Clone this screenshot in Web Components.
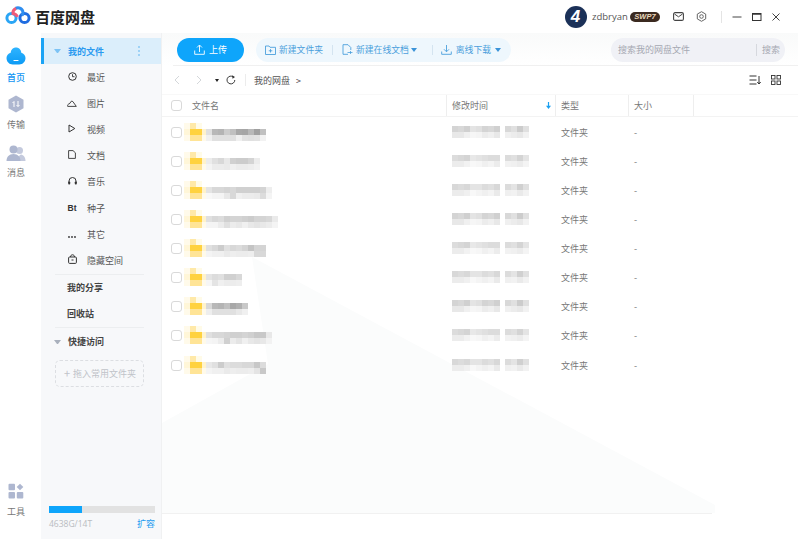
<!DOCTYPE html>
<html lang="zh-CN"><head><meta charset="utf-8"><title>百度网盘</title>
<style>
html,body{margin:0;padding:0;height:539px;overflow:hidden;background:#fff;font-family:"Noto Sans CJK SC","Noto Sans",sans-serif;font-size:9px;color:#555}
</style></head><body>
<bd-app></bd-app>
<script>
const FONT='"Noto Sans CJK SC","Noto Sans",sans-serif';
function def(name,css,html,init){
  customElements.define(name,class extends HTMLElement{
    constructor(){super();const s=this.attachShadow({mode:'open'});s.innerHTML='<style>'+css+'</style>'+(typeof html==='function'?html(this):html);}
    connectedCallback(){if(init&&!this._i){this._i=1;init(this)}}
  });
}
const ic=(w,h,body,extra='')=>`<svg width="${w}" height="${h}" viewBox="0 0 ${w} ${h}" fill="none" ${extra}>${body}</svg>`;

/* pixelated blocks that stand in for the censored names */
def('bd-mosaic',`:host{display:inline-grid;grid-auto-rows:6px;grid-auto-flow:row}
 .r{display:flex}.r i{display:block;width:6px;height:6px;flex:none}`,'',el=>{
  const rows=(el.getAttribute('cells')||'').split(';');
  el.shadowRoot.innerHTML+=rows.map(r=>'<div class="r">'+r.trim().split(/\s+/).map(t=>{
    const c=t==='--'?'transparent':t.length===2?'#'+t+t+t:'#'+t;
    return `<i style="background:${c}"></i>`}).join('')+'</div>').join('');
});

def('bd-titlebar',`:host{display:flex;align-items:center;background:#fff;color:#555;font-family:${FONT}}
 .logo{margin-left:5px;display:block}
 .name{margin-left:2px;font-size:15px;font-weight:700;color:#222;line-height:20px}
 .r{margin-left:auto;display:flex;align-items:center;height:33px}
 .av{width:22px;height:22px;border-radius:50%;background:#1b3158;color:#fff;font:italic 700 17px/22px "Liberation Sans",sans-serif;text-align:center;box-sizing:border-box;padding-right:1px}
 .u{margin-left:5px;font:9.5px "Open Sans",sans-serif;color:#555;width:36px;white-space:nowrap}
 .b{margin-left:2px;width:30px;height:10px;border-radius:5px;background:#3b2a20;color:#ead9bd;font:italic 700 7.5px/10px "Liberation Sans",sans-serif;text-align:center}
 .sep{width:1px;height:12px;background:#e4e4e4;margin:0 10px 0 14px}
 svg{display:block}`,
 `${ic(28,23,`<circle cx="6.500" cy="13" r="4.600" stroke="#2aa5f5" stroke-width="3"/><circle cx="19.500" cy="13" r="4.600" stroke="#1f6ce0" stroke-width="3"/><path d="M10.500 3.400A5 5 0 0 1 18 7.500c0 1.200-.5 2.300-1.200 3.100" stroke="#2f8ef0" stroke-width="3"/><path d="M11 3.300A5 5 0 0 0 8 8.600c2 .3 3.500 1.400 4.500 3.300" stroke="#ef5a78" stroke-width="3"/>`,'class="logo"')}
 <span class="name">百度网盘</span>
 <div class="r">
  <div class="av">4</div><span class="u">zdbryan</span><span class="b">SWP7</span>
  <span style="margin-left:13px">${ic(11,9,`<rect x=".6" y=".6" width="9.800" height="7.800" rx="1.500" stroke="#444" stroke-width="1.100"/><path d="M1.500 2l4 2.800L9.500 2" stroke="#444" stroke-width="1"/>`)}</span>
  <span style="margin-left:12px">${ic(11,11,`<path d="M5.500.7l4.200 2.400v4.800L5.500 10.300 1.300 7.900V3.100z" stroke="#666" stroke-width="1"/><circle cx="5.500" cy="5.500" r="1.800" stroke="#666"/>`)}</span>
  <span class="sep"></span>
  ${ic(10,10,`<path d="M.5 5h9" stroke="#444" stroke-width="1"/>`)}
  <span style="margin-left:10px">${ic(10,10,`<rect x=".5" y="1.500" width="8.500" height="7" stroke="#333"/><path d="M.5 2h8.500" stroke="#333" stroke-width="1.500"/>`)}</span>
  <span style="margin-left:9px;margin-right:17px">${ic(10,10,`<path d="M1.500 1.500l7 7M8.500 1.500l-7 7" stroke="#444" stroke-width="1"/>`)}</span>
 </div>`);

def('bd-rail-item',`:host{display:flex;flex-direction:column;align-items:center;width:32px;height:47.500px;font-size:9px;color:#777;font-family:${FONT}}
 :host([active]){color:#1296f3;font-weight:500}
 .i{height:20px;display:flex;align-items:center;justify-content:center}
 .l{margin-top:4px;line-height:12px}`,
 `<div class="i"><slot name="icon"></slot></div><div class="l"><slot></slot></div>`);

def('bd-rail',`:host{display:flex;flex-direction:column;background:#fff;padding-top:14.500px;padding-bottom:21px;box-sizing:border-box}
 .sp{flex:1}
 .last{height:auto}`,
 `<bd-rail-item active><span slot="icon">${ic(20,18,`<defs><linearGradient id="c" x1="0" y1="0" x2="0" y2="1"><stop offset="0" stop-color="#2fb4ff"/><stop offset="1" stop-color="#0c9bf5"/></linearGradient></defs><path d="M10 .5c3 0 5 2.200 5.300 5.200C17.800 6.400 19.500 8.300 19.500 11c0 3.600-2.700 6.500-6.300 6.500H6.800C3.200 17.500.5 14.600.5 11c0-2.700 1.700-4.600 4.200-5.300C5 2.700 7 .5 10 .5z" fill="url(#c)"/><path d="M8 13.500h4" stroke="#fff" stroke-width="1.200" stroke-linecap="round"/>`)}</span>首页</bd-rail-item>
 <bd-rail-item><span slot="icon">${ic(18,18,`<path d="M9 .5l7.500 4.200v8.600L9 17.500 1.500 13.300V4.700z" fill="#aeb7d0"/><path d="M7 12V6.500M5.500 8L7 6.500M11 6v5.500M9.500 10l1.500 1.500 1.500-1.500" stroke="#fff" stroke-width="1"/>`)}</span>传输</bd-rail-item>
 <bd-rail-item><span slot="icon" style="display:block;margin-top:3px">${ic(20,16,`<circle cx="13.500" cy="5.500" r="3.500" fill="#c4cadd"/><path d="M12 16c0-3 1-6 3-6.500 2.500.3 4.500 3 4.500 6.500z" fill="#c4cadd"/><circle cx="7.500" cy="4.500" r="4" fill="#aeb7d0"/><path d="M.5 16c0-4 2.500-7 7-7s7 3 7 7z" fill="#aeb7d0"/>`)}</span>消息</bd-rail-item>
 <div class="sp"></div>
 <bd-rail-item class="last"><span slot="icon">${ic(16,16,`<rect x=".5" y=".8" width="6.500" height="6.500" rx="1" fill="#aeb7d0"/><path d="M12 .7l3.300 3.300-3.300 3.300-3.300-3.300z" fill="#aeb7d0"/><rect x=".5" y="9" width="6.500" height="6.500" rx="1" fill="#aeb7d0"/><rect x="8.800" y="9" width="6.500" height="6.500" rx="1" fill="#aeb7d0"/>`)}</span>工具</bd-rail-item>`);

def('bd-side-item',`:host{display:flex;align-items:center;height:26.200px;padding-left:24px;color:#555;font-size:9px;font-family:${FONT}}
 .i{width:14px;display:flex;justify-content:center;margin-right:8px;flex:none}`,
 `<div class="i"><slot name="icon"></slot></div><slot></slot>`);

def('bd-side-head',`:host{display:flex;align-items:center;height:26px;padding-left:13px;font-weight:700;font-size:9px;color:#444;font-family:${FONT};box-sizing:border-box}
 :host([active]){background:#dbeefb;color:#2a9af0;border-left:3px solid #1aa3f5;padding-left:10px}
 :host([plain]){padding-left:26px}
 .t{width:7px;height:0;border-left:3.500px solid transparent;border-right:3.500px solid transparent;border-top:4px solid #a9b0bd;box-sizing:border-box;margin-right:7px}
 :host([active]) .t{border-top-color:#7cc3f5}
 :host([plain]) .t{display:none}
 .m{margin-left:auto;margin-right:21px;width:2px;display:flex;flex-direction:column;gap:2px}
 .m i{width:2px;height:2px;background:#8ac8f5;border-radius:1px}
 :host(:not([active])) .m{display:none}`,
 `<span class="t"></span><slot></slot><span class="m"><i></i><i></i><i></i></span>`);

def('bd-sidebar',`:host{display:flex;flex-direction:column;background:#f7f8fa;border-right:1px solid #f0f1f2;padding-top:5px;box-sizing:border-box;font-family:${FONT}}
 .hr{height:1px;background:#eceef0;margin:0 17px 0 14px}
 .drag{margin:4px 17px 0 14px;height:27px;border:1px dashed #dcdee2;border-radius:5px;box-sizing:border-box;display:flex;align-items:center;padding-left:8px;color:#c0c3c9;font-size:9px}
 .drag b{font-weight:400;margin-right:3px;font-size:11px;line-height:10px}
 .st{margin-top:auto;padding:0 6px 9px 8px}
 .bar{height:7px;background:#e2e2e2}
 .bar i{display:block;height:7px;width:33px;background:#0ea5fb}
 .f{display:flex;justify-content:space-between;margin-top:5px;line-height:12px;font-size:9px;color:#b9bcc1}
 .f b{font-weight:400;color:#1c9bf0}
 .f span{font-family:"Open Sans",sans-serif;font-size:8.500px}`,
 `<bd-side-head active>我的文件</bd-side-head>
 <bd-side-item><span slot="icon">${ic(9,9,`<circle cx="4.500" cy="4.500" r="3.800" stroke="#333"/><path d="M4.500 2.200v2.500h2" stroke="#333" stroke-width=".9"/>`)}</span>最近</bd-side-item>
 <bd-side-item><span slot="icon">${ic(10,7,`<path d="M.7 6.400c-.4-1.500.4-2.400 1.500-2.400L4.600 1l1.300.6L9.300 6.400z" stroke="#333" stroke-width=".9"/>`)}</span>图片</bd-side-item>
 <bd-side-item><span slot="icon">${ic(8,9,`<path d="M1 1l5.800 3.500L1 8z" stroke="#333" stroke-width="1" stroke-linejoin="round"/>`)}</span>视频</bd-side-item>
 <bd-side-item><span slot="icon">${ic(8,9,`<path d="M.6.600H5L7.400 2.800v5.600H.6z" stroke="#333" stroke-width=".9"/>`)}</span>文档</bd-side-item>
 <bd-side-item><span slot="icon">${ic(9,8,`<path d="M1 6V4a3.500 3.500 0 0 1 7 0v2" stroke="#333"/><rect x=".2" y="4.500" width="2" height="3" rx=".8" fill="#333"/><rect x="6.800" y="4.500" width="2" height="3" rx=".8" fill="#333"/>`)}</span>音乐</bd-side-item>
 <bd-side-item><span slot="icon" style="font:700 8.500px 'Liberation Sans',sans-serif;color:#333;line-height:10px">Bt</span>种子</bd-side-item>
 <bd-side-item><span slot="icon">${ic(8,2,`<circle cx="1" cy="1" r=".9" fill="#333"/><circle cx="4" cy="1" r=".9" fill="#333"/><circle cx="7" cy="1" r=".9" fill="#333"/>`)}</span>其它</bd-side-item>
 <bd-side-item><span slot="icon">${ic(9,10,`<rect x=".6" y="3" width="7.800" height="6.400" rx="1" stroke="#333"/><path d="M2.500 3c0-3 4-3 4 0" stroke="#333"/><path d="M3.500 6h2" stroke="#333"/>`)}</span>隐藏空间</bd-side-item>
 <div class="hr"></div>
 <bd-side-head plain>我的分享</bd-side-head>
 <bd-side-head plain>回收站</bd-side-head>
 <div class="hr"></div>
 <bd-side-head style="height:28px">快捷访问</bd-side-head>
 <div class="drag"><b>+</b>拖入常用文件夹</div>
 <div class="st"><div class="bar"><i></i></div><div class="f"><span>4638G/14T</span><b>扩容</b></div></div>`);

def('bd-toolbar',`:host{display:flex;align-items:center;height:33px;box-sizing:border-box;padding:0 13px 0 15px;background:linear-gradient(#f9fafa,#fff);position:relative;font-family:${FONT}}
 :host::after{content:"";position:absolute;left:11px;right:0;bottom:0;height:1px;background:#f0f0f0}
 .up{width:67px;height:24px;border-radius:12px;background:#0ea5fb;color:#fff;display:flex;align-items:center;justify-content:center;gap:4px;font-size:9px}
 .pill{margin-left:12px;width:255px;height:24px;border-radius:12px;background:#eef7fd;display:flex;align-items:center;padding-left:9px;box-sizing:border-box;color:#4b9fdc;font-size:8.800px;white-space:nowrap}
 .s{width:1px;height:10px;background:#d4e4f0;flex:none}
 .tri{width:0;height:0;border-left:3px solid transparent;border-right:3px solid transparent;border-top:4px solid #3b93d8;flex:none;margin-left:2px}
 .search{margin-left:auto;width:174px;height:24px;border-radius:12px;background:#f0f1f6;display:flex;align-items:center;padding:0 5px 0 7px;box-sizing:border-box;color:#a5a8b2;font-size:9px}
 .search i{margin-left:auto;width:1px;height:12px;background:#d6d8de;margin-right:5px}
 svg{display:block;flex:none}`,
 `<div class="up">${ic(11,11,`<path d="M5.500 8V1.200M3 3.500l2.500-2.500L8 3.500M.7 6.500v3.800h9.600V6.500" stroke="#fff" stroke-width=".9"/>`)}上传</div>
 <div class="pill">
  ${ic(11,10,`<path d="M.5 1h3.500l1 1.300h5.500v7.200H.5z" stroke="#4b9fdc" stroke-width=".9"/><path d="M3.800 5.800h3.500M5.500 4.100v3.400" stroke="#4b9fdc" stroke-width=".9"/>`)}
  <span style="margin-left:3px">新建文件夹</span><span class="s" style="margin-left:9px"></span>
  ${ic(11,11,`<path d="M6 10.300H1V.7h5l2.800 2.800V6" stroke="#4b9fdc" stroke-width=".9"/><path d="M5.500 8.500h5M8.500 7v3" stroke="#4b9fdc" stroke-width=".8"/>`,'style="margin-left:9px"')}
  <span style="margin-left:3px">新建在线文档</span><span class="tri"></span><span class="s" style="margin-left:15px"></span>
  ${ic(11,11,`<path d="M5.500 1v6.500M3 5.300l2.500 2.500L8 5.300M.7 7.500v2.800h9.600V7.500" stroke="#4b9fdc" stroke-width=".9"/>`,'style="margin-left:8px"')}
  <span style="margin-left:4px">离线下载</span><span class="tri" style="margin-left:4px"></span>
 </div>
 <div class="search"><span>搜索我的网盘文件</span><i></i><span>搜索</span></div>`);

def('bd-nav',`:host{display:flex;align-items:center;height:29px;box-sizing:border-box;border-bottom:1px solid #f8f8f8;padding-right:17px;color:#555;font-size:9px;font-family:${FONT}}
 svg{display:block;flex:none}
 .tr{width:0;height:0;border-left:2.500px solid transparent;border-right:2.500px solid transparent;border-top:3.500px solid #222;margin-left:13px}
 .s{width:1px;height:12px;background:#ececec;margin-left:9px}
 .rt{margin-left:auto;display:flex;gap:10px;align-items:center}`,
 `<span style="margin-left:12px">${ic(6,10,`<path d="M5 1L1 5l4 4" stroke="#cfd2d6" stroke-width=".9"/>`)}</span>
 <span style="margin-left:16px">${ic(6,10,`<path d="M1 1l4 4-4 4" stroke="#cfd2d6" stroke-width=".9"/>`)}</span>
 <span class="tr"></span>
 <span style="margin-left:7px">${ic(10,10,`<path d="M8.800 5A3.900 3.900 0 1 1 7.400 2" stroke="#333" stroke-width=".95"/><path d="M6 .2L9 2 6.600 3.800z" fill="#333"/>`)}</span>
 <span class="s"></span><span style="margin-left:8px">我的网盘</span><span style="margin-left:6px;font-size:9px;color:#444">&gt;</span>
 <div class="rt">${ic(12,10,`<path d="M.5 1h7M.5 5h7M.5 9h7M10 1v8M8.300 7L10 9l1.700-2" stroke="#333" stroke-width="1"/>`)}${ic(10,10,`<rect x=".5" y=".5" width="3.500" height="3.500" stroke="#333" stroke-width=".9"/><rect x="6" y=".5" width="3.500" height="3.500" stroke="#333" stroke-width=".9"/><rect x=".5" y="6" width="3.500" height="3.500" stroke="#333" stroke-width=".9"/><rect x="6" y="6" width="3.500" height="3.500" stroke="#333" stroke-width=".9"/>`)}</div>`);

const COLS='284px 109px 73px 65px 1fr';
def('bd-check',`:host{display:block;width:11px;height:11px;box-sizing:border-box;border:1px solid #d9d9d9;border-radius:3px;background:#fff;flex:none}`,'');

def('bd-thead',`:host{display:grid;grid-template-columns:${COLS};height:22px;box-sizing:border-box;border-bottom:1px solid #f3f3f3;color:#777;font-size:9px;font-family:${FONT}}
 .c{display:flex;align-items:center;border-left:1px solid #eee;padding-left:5px;position:relative}
 .c.first{border:0;padding-left:9px}
 .c.first span{margin-left:10px}
 .c svg{margin-left:auto;margin-right:4px}`,
 `<div class="c first"><bd-check></bd-check><span>文件名</span></div>
 <div class="c"><span>修改时间</span>${ic(5,7,`<path d="M2.500 0v5" stroke="#1a9ff0" stroke-width="1.200"/><path d="M0 3.800h5L2.500 7z" fill="#1a9ff0"/>`)}</div>
 <div class="c"><span>类型</span></div><div class="c"><span>大小</span></div><div class="c"></div>`);

const FOLDER='fffaea ffe9a8 fffbe8 --;fff6d8 ffd23f ffd23f fff3cc;fffaea ffe496 ffe496 fffaea';
def('bd-row',`:host{display:grid;grid-template-columns:${COLS};height:29.125px;color:#777;font-size:9px;font-family:${FONT}}
 .c{display:flex;align-items:center;padding-left:6px;min-width:0}
 .t{padding-top:1px}
 .n{padding-left:9px}
 bd-check{margin-right:2px;margin-top:1px}
 .nm{margin-top:6px;margin-left:-2px;position:relative}
 .dt{display:flex;gap:5px}`,
 el=>{
  const [nt,nb]=el.getAttribute('name').split('|'), [d1,d2]=el.getAttribute('date').split('|');
  const [a,b]=d1.split('/'),[c,e]=d2.split('/');
  return `<div class="c n"><bd-check></bd-check><bd-mosaic cells="${FOLDER}"></bd-mosaic><bd-mosaic class="nm" cells="${nt};${nb}"></bd-mosaic></div>
  <div class="c"><div class="dt"><bd-mosaic cells="${a};${c}"></bd-mosaic><bd-mosaic cells="${b};${e}"></bd-mosaic></div></div>
  <div class="c t"><span>文件夹</span></div><div class="c t"><span>-</span></div><div class="c"></div>`;
 });

const D=['d4 d8 d0 e4 e0 d4 d8 d0/d8 e0 cc e0|e8 e8 f0 f6 f4 ec f0 e8/f0 ec e8 f2',
 'dc d8 d4 e8 e4 e0 dc dc/dc e0 d4 e4|ec ec f2 f8 f6 f0 f4 ec/f2 f0 ec f4',
 'd8 dc d8 e4 e4 dc e0 d8/dc e4 d0 e0|ec ec f0 f8 f4 f0 f4 ea/f0 f2 ea f2'];
const N=[
 'e0 b8 b4 cc c0 a8 a6 b8 a0 c0|f0 e0 e0 e0 e0 f0 e2 e0 e2 f2',
 'ec e0 d8 e8 d0 cc cc d4 ec|f4 ec ec ea f0 ec ec ee f2',
 'e4 d8 d8 d4 d8 d0 d0 d0 d0 d4 ee|f8 f4 f4 e8 d8 f0 ec ec ea dc f4',
 'e0 d8 dc d0 d4 d4 d0 cc d4 d4 d8 ea|f4 f4 ec e0 ec e8 f0 e8 e4 e8 ec f4',
 'e0 d8 cc e0 d8 dc d4 c4 d4 d4|f4 f0 f0 ea ee ec ec ee d8 d8',
 'e4 dc e0 d0 d0 d8|f6 e4 f0 ec ec ee',
 'd8 b8 b4 c0 a8 b0 c8|ee e0 e0 e0 e0 e8 f0',
 'e0 d8 d8 d4 d0 d0 d4 d0 c8 c8 e8|f6 f4 ec d0 ec e4 f0 e8 e4 e8 f2',
 'e8 e0 cc e0 dc dc d8 d8 c8 dc|f4 f0 f0 ea ee ec ec ee e4 c8'];
def('bd-main',`:host{display:flex;flex-direction:column;position:relative;background:#fff;overflow:hidden}
 .bg{position:absolute;left:0;top:0;width:636px;height:506px;z-index:0}
 .c{position:relative;z-index:1;display:flex;flex-direction:column;flex:1}
 .foot{margin-top:auto;height:26px;box-sizing:border-box;border-top:1px solid #f1f1f1;margin-right:86px}`,
 `<svg class="bg" viewBox="0 0 636 506"><path d="M90 224L553 472V480H0V390L106 331z" fill="#fbfcfc"/></svg>
 <div class="c"><bd-toolbar></bd-toolbar><bd-nav></bd-nav><bd-thead></bd-thead>
 ${N.map((n,i)=>`<bd-row name="${n}" date="${D[i%3]}"></bd-row>`).join('')}
 <div class="foot"></div></div>`);

def('bd-app',`:host{display:grid;grid-template-columns:41px 121px 1fr;grid-template-rows:33px 1fr;height:539px;width:798px;overflow:hidden}
 bd-titlebar{grid-column:1/4}`,
 `<bd-titlebar></bd-titlebar><bd-rail></bd-rail><bd-sidebar></bd-sidebar><bd-main></bd-main>`);
</script>
</body></html>
